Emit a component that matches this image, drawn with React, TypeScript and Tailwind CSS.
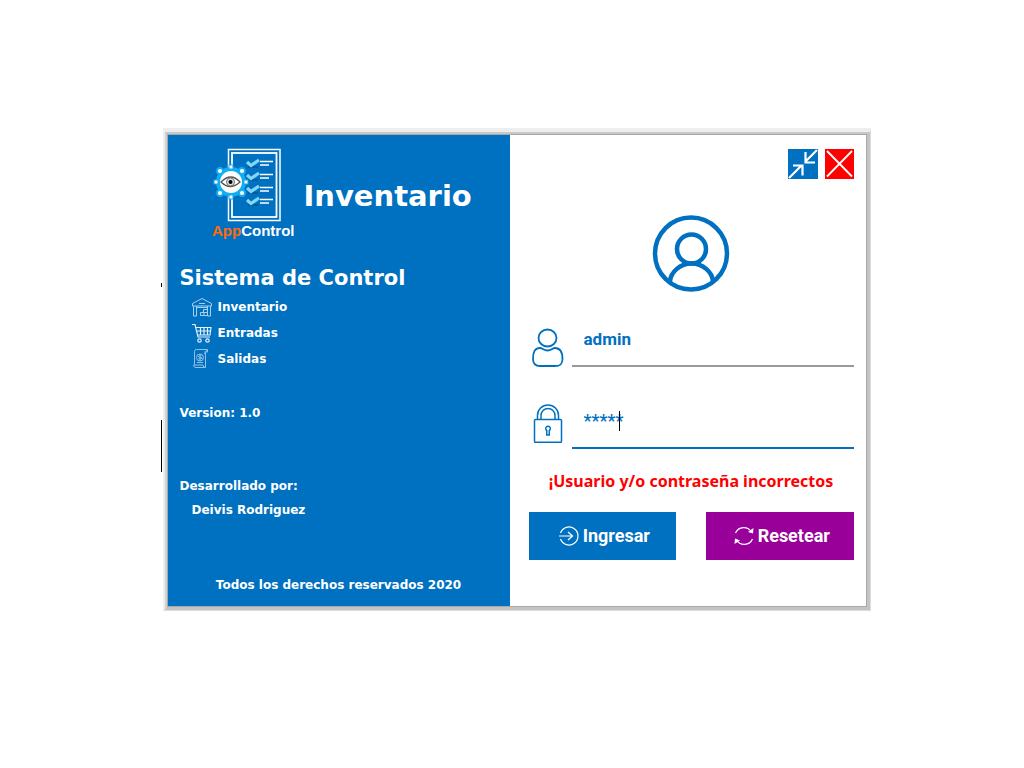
import React, { useState } from "react";

function Logo() {
  const nodes = [[31, 7], [31, 37], [16, 22], [46, 22]];
  const corners = [[20, 11], [42, 11], [20, 33], [42, 33]];
  return (
    <svg width="82" height="92" viewBox="0 0 82 92" role="img" aria-label="AppControl">
      <rect x="16.5" y="1.5" width="51.5" height="71" fill="none" stroke="#fff" strokeWidth="1.5" />
      <rect x="20" y="5" width="44.500" height="64" fill="none" stroke="#fff" strokeWidth="1.8" />
      {[13, 26, 39, 51].map((y) => (
        <g key={y}>
          <path d={`M36 ${y + 6}h10`} fill="none" stroke="#075a9e" strokeWidth="2" />
          <path d={`M35 ${y + 1}l4 3.5 8-5.500`} fill="none" stroke="#7fd8f5" strokeWidth="3.200" />
          <path d={`M48 ${y}.5h13M48 ${y + 4}h9`} fill="none" stroke="#fff" strokeWidth="1.5" />
        </g>
      ))}
      <g transform="translate(-12 12)">
        <circle cx="31" cy="22" r="15" fill="#10aef5" />
        <circle cx="31" cy="22" r="11" fill="#fff" />
        {nodes.map(([x, y]) => (
          <rect key={`${x}-${y}`} x={x - 2} y={y - 2} width="4" height="4" fill="#fff" stroke="#16a9ee" />
        ))}
        {corners.map(([x, y]) => (
          <circle key={`${x}-${y}`} cx={x} cy={y} r="3" fill="#fff" stroke="#10aef5" strokeWidth="1.8" />
        ))}
        <path d="M21 22q10-10 19 0q-10 9-19 0z" fill="#fff" stroke="#555" strokeWidth="1.3" />
        <circle cx="30.500" cy="22" r="4" fill="#ddd" stroke="#777" />
        <circle cx="30.500" cy="22" r="2" fill="#000" />
      </g>
      <text x="0" y="88" fontFamily="Liberation Sans, sans-serif" fontSize="15" fontWeight="700" fill="#fff">
        <tspan fill="#ff6a0d">App</tspan>Control
      </text>
    </svg>
  );
}

function WarehouseIcon() {
  return (
    <svg width="20" height="20" viewBox="0 0 20 20" fill="none" stroke="#a9d0ee" aria-hidden="true">
      <path d="M.5 6.500 10 1.500l9.500 5v2.500h-19z" />
      <path d="M1.500 9v10h3V9M15.500 9v10h3V9M4.500 10.500h11M7 6.500h6" />
      <path d="M8.500 18.500h7v-3h-7zM11.500 15.500v-3h4v3M12 15.500v3" />
    </svg>
  );
}

function CartIcon() {
  return (
    <svg width="20" height="20" viewBox="0 0 20 20" fill="none" stroke="#e4f1fb" strokeWidth="1.200" aria-hidden="true">
      <path d="M0 1.500h3l3 12.500h12M3.500 4.500h15.500l-1 7.500H5.500M4.500 8h14M8.500 4.500V12M12 4.500V12M15.500 4.500V12" />
      <circle cx="7.500" cy="17.500" r="1.700" />
      <circle cx="15.500" cy="17.500" r="1.700" />
    </svg>
  );
}

function InvoiceIcon() {
  return (
    <svg width="20" height="20" viewBox="0 0 20 20" fill="none" stroke="#8fc1e7" aria-hidden="true">
      <path d="M2.500 15.500V2.500q0-2 2-2h11v2.500h-3M13.500 4v14.500H4q-2.500 0-2.500-2.500h9.500q0 2.500 2.500 2.500" />
      <circle cx="8" cy="8.500" r="3.500" />
      <path d="M9.500 7q-3-1-3 .5t3 1.500-3 1M8 5.500v6M5 13.500h6M12 5l3-4" />
    </svg>
  );
}

function AvatarIcon() {
  return (
    <svg width="78" height="78" viewBox="0 0 78 78" fill="none" stroke="#0070c0" strokeWidth="4.500" aria-hidden="true">
      <circle cx="39" cy="39.500" r="36" />
      <circle cx="39.500" cy="35" r="14.500" />
      <path d="M18 68v-1c1-9 10-17.500 21.500-17.500S60 58 61 67v1" />
    </svg>
  );
}

function UserIcon() {
  return (
    <svg width="35" height="40" viewBox="0 0 35 40" fill="none" stroke="#0070c0" strokeWidth="1.800" aria-hidden="true">
      <ellipse cx="18.500" cy="11" rx="9" ry="8.500" />
      <path d="M11 21C5 21 4 26.500 4 32S6.500 39 11 39h15c5 0 7.500-1.500 7.500-7S32 21 26 21c-2.500 0-3.500 2.500-7.500 2.500S13.500 21 11 21z" />
    </svg>
  );
}

function LockIcon() {
  return (
    <svg width="35" height="40" viewBox="0 0 35 40" fill="none" stroke="#0070c0" strokeWidth="1.500" aria-hidden="true">
      <rect x="5.500" y="16.500" width="27" height="22.800" rx="1" />
      <path d="M8.500 16.500V12a10.500 10 0 0 1 21 0v4.500M12 16.500V12.500a7 7 0 0 1 14 0v4" />
      <path d="M17.800 27.500a2.300 2.300 0 1 1 2.500 0v4.500h-2.500z" />
    </svg>
  );
}

const field = "min-w-0 flex-1 border-b-2 bg-transparent pl-3 font-['Roboto',sans-serif] text-[#0070c0] outline-none";
const action = "flex h-12 flex-1 items-center justify-center gap-1 pl-1 font-['Roboto',sans-serif] text-lg font-bold text-white";

export default function App() {
  const [user, setUser] = useState("admin");
  const [password, setPassword] = useState("*****");
  const [failed, setFailed] = useState(true);

  const clear = () => {
    setUser("");
    setPassword("");
    setFailed(false);
  };

  return (
    <main className="flex min-h-screen items-start justify-center bg-white pt-32 pl-[9px] font-['DejaVu_Sans',sans-serif] font-bold">
      <div className="relative w-full max-w-[708px] border-t-4 border-r border-b border-l-2 border-t-[#eeeeee] border-r-[#dcdcdc] border-b-[#dcdcdc] border-l-[#eeeeee]">
        <span className="absolute top-[288px] -left-[4px] h-[52px] w-px bg-black" />
        <span className="absolute top-[151px] -left-[4px] h-1 w-px bg-black" />
        <div className="border-t-2 border-r-[3px] border-b-[3px] border-l-2 border-t-[#c8c8c8] border-r-[#c4c4c4] border-b-[#c4c4c4] border-l-[#d2d2d2]">
          <div className="flex border border-[#a8a8a8]">
            <section className="flex w-[49%] flex-col bg-[#0070c0] px-3 text-xs text-white">
              <header className="flex gap-2.5 pt-[13px] pl-8">
                <Logo />
                <h1 className="pt-7 text-[29px] leading-10">Inventario</h1>
              </header>
              <h2 className="mt-[22px] text-[21px] leading-8">Sistema de Control</h2>
              <ul className="mt-[3px] flex flex-col gap-1.5 pl-3">
                <li className="flex h-5 items-center gap-1.5"><WarehouseIcon />Inventario</li>
                <li className="flex h-5 items-center gap-1.5"><CartIcon />Entradas</li>
                <li className="flex h-5 items-center gap-1.5"><InvoiceIcon />Salidas</li>
              </ul>
              <p className="mt-9">Version: 1.0</p>
              <p className="mt-[57px]">Desarrollado por:</p>
              <p className="mt-2 pl-3">Deivis Rodriguez</p>
              <p className="mt-[59px] mb-[13px] text-center">Todos los derechos reservados 2020</p>
            </section>

            <form
              className="flex flex-1 flex-col bg-white px-3 pt-3.5 pl-[19px]"
              onSubmit={(e) => {
                e.preventDefault();
                setFailed(true);
              }}
            >
              <div className="flex justify-end gap-[7px]">
                <button type="button" aria-label="Minimizar" className="size-[30px] bg-[#0070c0]">
                  <svg width="30" height="30" viewBox="0 0 30 30" fill="none" stroke="#fff" strokeWidth="2.200">
                    <path d="M29 1 17.500 12.500M17.500 3v10.500H27M1 29l12-12M5 16.500h9.500v10" />
                  </svg>
                </button>
                <button type="button" aria-label="Cerrar" className="h-[30px] w-[29px] bg-[#ff0000]">
                  <svg width="29" height="30" viewBox="0 0 29 30" fill="none" stroke="#fff" strokeWidth="1.800">
                    <path d="m2 2 25 25.500M27 2 2 27.500" />
                  </svg>
                </button>
              </div>
              <div className="mt-[35px] flex justify-center"><AvatarIcon /></div>

              <div className="mt-[35px] flex gap-2">
                <label htmlFor="user" aria-label="Usuario"><UserIcon /></label>
                <input id="user" value={user} onChange={(e) => setUser(e.target.value)} className={`${field} h-10 border-[#999] pb-3.5 text-[17px] font-bold`} />
              </div>
              <div className="mt-9 flex gap-2">
                <label htmlFor="password" aria-label="Contraseña"><LockIcon /></label>
                <div className="relative flex min-w-0 flex-1">
                  <input id="password" value={password} onChange={(e) => setPassword(e.target.value)} className={`${field} h-[46px] border-[#0070c0] pb-2.5 text-lg font-medium`} />
                  <span className="absolute top-2 left-[47px] h-5 w-px bg-black" />
                </div>
              </div>

              <p role="alert" className="mt-5 h-6 text-center font-['Noto_Sans',sans-serif] text-base leading-6 text-[#ff0000]">
                {failed && "¡Usuario y/o contraseña incorrectos"}
              </p>
              <div className="mt-[19px] flex gap-[30px]">
                <button type="submit" className={`${action} bg-[#0070c0]`}>
                  <svg width="20" height="20" viewBox="0 0 20 20" fill="none" stroke="currentColor" strokeWidth="1.2" aria-hidden="true">
                    <path d="M1.500 7a9 9 0 1 1 0 6M0 10h13M9 6l4.500 4L9 14" />
                  </svg>
                  Ingresar
                </button>
                <button type="button" onClick={clear} className={`${action} bg-[#990099]`}>
                  <svg width="20" height="20" viewBox="0 0 20 20" fill="none" stroke="currentColor" strokeWidth="1.2" aria-hidden="true">
                    <path d="M1.500 7a9 9 0 0 1 16-1M18.500 13a9 9 0 0 1-16 1" />
                    <path d="m19.500 2-.5 5.500-5-1.500zM.5 18l.5-5.500 5 2z" fill="currentColor" stroke="none" />
                  </svg>
                  Resetear
                </button>
              </div>
            </form>
          </div>
        </div>
      </div>
    </main>
  );
}
